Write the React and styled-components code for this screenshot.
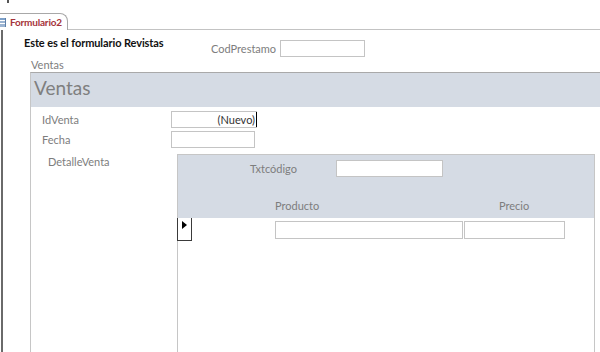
import React from "react";
import styled, { createGlobalStyle } from "styled-components";

const Global = createGlobalStyle`
  html, body { margin: 0; padding: 0; background: #ffffff; }
  body { font-family: Lato, "Liberation Sans", sans-serif; overflow: hidden; }
  * { box-sizing: border-box; }
`;

const Window = styled.div`
  width: 600px;
  height: 352px;
  display: flex;
  flex-direction: column;
  overflow: hidden;
`;

const TabStrip = styled.div`
  height: 30px;
  flex: none;
  display: flex;
  align-items: flex-end;
  border-bottom: 1px solid #c3c3c3;
  position: relative;
`;

const TopTick = styled.span`
  position: absolute;
  left: 7px;
  top: 0;
  width: 2px;
  height: 3px;
  background: #555;
`;

const Tab = styled.div`
  height: 17px;
  width: 68px;
  margin-bottom: -1px;
  display: flex;
  align-items: center;
  gap: 4px;
  background: #ffffff;
  border-top: 1px solid #a8a8a8;
  border-right: 1px solid #a8a8a8;
  border-top-right-radius: 8px;
`;

const TabIcon = styled.span`
  width: 6px;
  height: 9px;
  flex: none;
  background: linear-gradient(#7da0c8 0 2px, #ffffff 2px 3px, #9bb4d2 3px 5px, #ffffff 5px 6px, #9bb4d2 6px);
  border-right: 1px solid #5d7fa8;
`;

const TabLabel = styled.span`
  font-size: 10px;
  font-weight: 700;
  color: #a5333a;
  letter-spacing: -0.2px;
  line-height: 12px;
`;

const Canvas = styled.div`
  flex: 1;
  margin-left: 1px;
  border-left: 2px solid #6a6a6a;
  display: flex;
  flex-direction: column;
  min-height: 0;
`;

const HeaderRow = styled.div`
  display: flex;
  align-items: flex-start;
  padding-top: 6px;
  padding-left: 21px;
  height: 27px;
  flex: none;
`;

const Title = styled.div`
  width: 187px;
  font-size: 11px;
  font-weight: 700;
  color: #111;
  line-height: 14px;
  white-space: nowrap;
  letter-spacing: -0.1px;
`;

const FieldGroup = styled.div`
  display: flex;
  align-items: center;
  margin-top: ${(p) => p.$offset || 0}px;
`;

const Label = styled.span`
  width: ${(p) => p.$w}px;
  flex: none;
  font-size: 11px;
  color: #7d7d7d;
  line-height: 13px;
  white-space: nowrap;
  text-align: left;
`;

const Input = styled.div`
  width: ${(p) => p.$w}px;
  height: ${(p) => p.$h || 17}px;
  flex: none;
  border: 1px solid #c4c4c4;
  background: #fff;
  display: flex;
  align-items: center;
  justify-content: flex-end;
  font-size: 11px;
  color: #333;
`;

const Caret = styled.span`
  border-right: 1px solid #000;
  height: 15px;
  display: flex;
  align-items: center;
  padding-right: 1px;
  margin-right: -1px;
`;

const Caption = styled.div`
  height: 15px;
  flex: none;
  padding-left: 28px;
  font-size: 11px;
  color: #7d7d7d;
  line-height: 15px;
`;

const Subform = styled.div`
  flex: 1;
  margin-left: 27px;
  width: 600px;
  border-left: 1px solid #c6c6c6;
  border-top: 1px solid #a9a9a9;
  display: flex;
  flex-direction: column;
  min-height: 0;
`;

const Band = styled.div`
  height: ${(p) => p.$h}px;
  flex: none;
  background: #d5dbe4;
`;

const BigTitle = styled.div`
  padding-left: 3px;
  font-size: 19px;
  color: #7f7f7f;
  line-height: 29px;
`;

const Detail = styled.div`
  flex: 1;
  display: flex;
  flex-direction: column;
  padding-top: 4px;
  gap: 3px;
  min-height: 0;
`;

const Row = styled.div`
  display: flex;
  align-items: center;
  padding-left: 11px;
`;

const NestedRow = styled.div`
  flex: 1;
  display: flex;
  align-items: flex-start;
  padding-top: 3px;
  min-height: 0;
`;

const NestedLabel = styled.span`
  width: 146px;
  flex: none;
  padding-left: 17px;
  padding-top: 1px;
  font-size: 11px;
  color: #7d7d7d;
  line-height: 13px;
`;

const Inner = styled.div`
  width: 418px;
  align-self: stretch;
  border: 1px solid #c6c6c6;
  border-bottom: none;
  display: flex;
  flex-direction: column;
`;

const InnerBand = styled(Band)`
  display: flex;
  flex-direction: column;
  padding-top: 5px;
`;

const CodeRow = styled.div`
  display: flex;
  align-items: center;
  padding-left: 72px;
`;

const ColHeads = styled.div`
  display: grid;
  grid-template-columns: 97px 223px 100px;
  margin-top: 22px;
  font-size: 11px;
  color: #7d7d7d;
  line-height: 13px;
`;

const Head = styled.span`
  grid-column: ${(p) => p.$col};
  padding-left: ${(p) => p.$pad || 0}px;
`;

const RecordRow = styled.div`
  display: flex;
  align-items: flex-start;
`;

const Selector = styled.div`
  width: 15px;
  height: 23px;
  flex: none;
  margin-left: -1px;
  border-right: 1px solid #3a3a3a;
  border-bottom: 1px solid #3a3a3a;
  border-left: 1px solid #3a3a3a;
  padding-top: 3px;
  padding-left: 4px;
  margin-right: 83px;
`;

const Arrow = styled.span`
  display: block;
  width: 0;
  height: 0;
  border-top: 4px solid transparent;
  border-bottom: 4px solid transparent;
  border-left: 5px solid #000;
`;

const Cells = styled.div`
  display: flex;
  gap: 1px;
  margin-top: 3px;
`;

export default function App() {
  return (
    <>
      <Global />
      <Window>
        <TabStrip>
          <TopTick />
          <Tab>
            <TabIcon />
            <TabLabel>Formulario2</TabLabel>
          </Tab>
        </TabStrip>
        <Canvas>
          <HeaderRow>
            <Title>Este es el formulario Revistas</Title>
            <FieldGroup $offset={4}>
              <Label $w={69}>CodPrestamo</Label>
              <Input $w={85} />
            </FieldGroup>
          </HeaderRow>
          <Caption>Ventas</Caption>
          <Subform>
            <Band $h={34}>
              <BigTitle>Ventas</BigTitle>
            </Band>
            <Detail>
              <Row>
                <Label $w={129}>IdVenta</Label>
                <Input $w={86}>
                  <Caret>(Nuevo)</Caret>
                </Input>
              </Row>
              <Row>
                <Label $w={129}>Fecha</Label>
                <Input $w={84} />
              </Row>
              <NestedRow>
                <NestedLabel>DetalleVenta</NestedLabel>
                <Inner>
                  <InnerBand $h={63}>
                    <CodeRow>
                      <Label $w={86}>Txtcódigo</Label>
                      <Input $w={107} />
                    </CodeRow>
                    <ColHeads>
                      <Head $col={2}>Producto</Head>
                      <Head $col={3} $pad={1}>Precio</Head>
                    </ColHeads>
                  </InnerBand>
                  <RecordRow>
                    <Selector>
                      <Arrow />
                    </Selector>
                    <Cells>
                      <Input $w={188} $h={18} />
                      <Input $w={101} $h={18} />
                    </Cells>
                  </RecordRow>
                </Inner>
              </NestedRow>
            </Detail>
          </Subform>
        </Canvas>
      </Window>
    </>
  );
}
